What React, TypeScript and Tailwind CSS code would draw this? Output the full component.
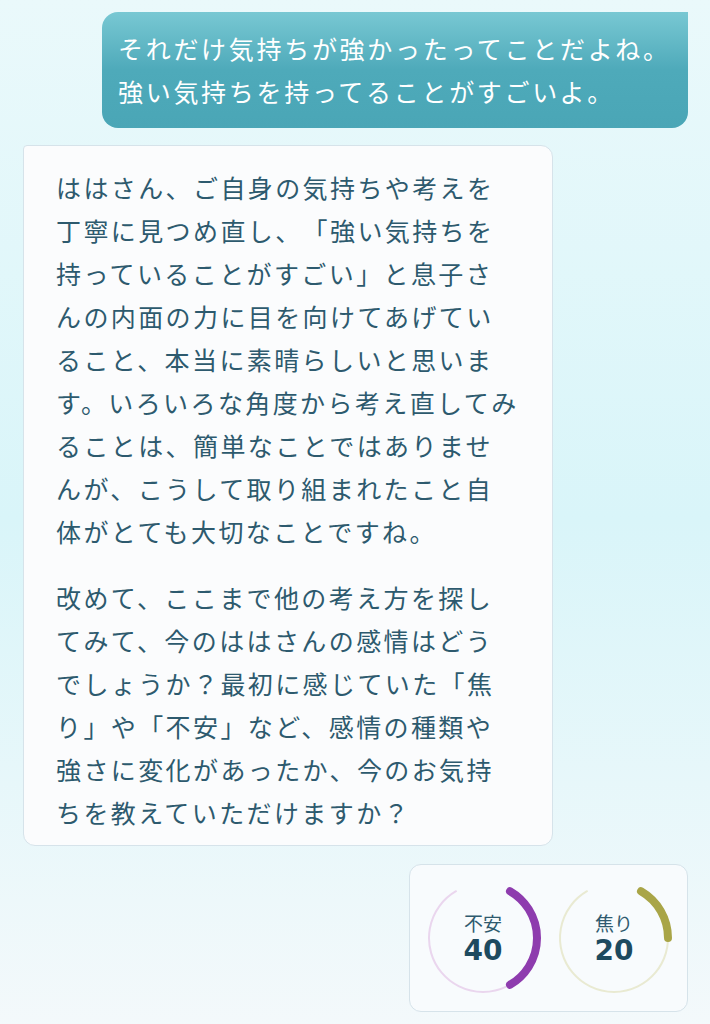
import React from "react";

const FONT = '"Noto Sans CJK JP", "Noto Sans", sans-serif';

const userLines = ["それだけ気持ちが強かったってことだよね。", "強い気持ちを持ってることがすごいよ。"];

const replyParagraphs = [
  [
    "ははさん、ご自身の気持ちや考えを",
    "丁寧に見つめ直し、「強い気持ちを",
    "持っていることがすごい」と息子さ",
    "んの内面の力に目を向けてあげてい",
    "ること、本当に素晴らしいと思いま",
    "す。いろいろな角度から考え直してみ",
    "ることは、簡単なことではありませ",
    "んが、こうして取り組まれたこと自",
    "体がとても大切なことですね。",
  ],
  [
    "改めて、ここまで他の考え方を探し",
    "てみて、今のははさんの感情はどう",
    "でしょうか？最初に感じていた「焦",
    "り」や「不安」など、感情の種類や",
    "強さに変化があったか、今のお気持",
    "ちを教えていただけますか？",
  ],
];

const emotions = [
  { label: "不安", value: 40, color: "#8e3cae", track: "#ead6ee" },
  { label: "焦り", value: 20, color: "#a9a547", track: "#e9ead2" },
];

// angle measured clockwise from 12 o'clock
function point(deg: number, r: number, c: number) {
  const rad = (deg * Math.PI) / 180;
  return [c + r * Math.sin(rad), c - r * Math.cos(rad)];
}

function arc(start: number, end: number, r: number, c: number) {
  const [x1, y1] = point(start, r, c);
  const [x2, y2] = point(end, r, c);
  const large = end - start > 180 ? 1 : 0;
  return `M ${x1} ${y1} A ${r} ${r} 0 ${large} 1 ${x2} ${y2}`;
}

function Gauge({ label, value, color, track }: (typeof emotions)[number]) {
  const start = 30;
  const sweep = 300;
  return (
    <div className="relative w-[116px] h-[116px]">
      <svg width="116" height="116" viewBox="0 0 116 116">
        <path d={arc(start, start + sweep, 54, 58)} fill="none" stroke={track} strokeWidth="2" strokeLinecap="round" />
        <path
          d={arc(start, start + (sweep * value) / 100, 54, 58)}
          fill="none"
          stroke={color}
          strokeWidth="8"
          strokeLinecap="round"
        />
      </svg>
      <div className="absolute inset-0 flex flex-col items-center justify-center pt-[2px]">
        <span className="text-[19px] leading-[20px] text-[#2f5a6e]">{label}</span>
        <span
          className="mt-[3px] text-[28px] leading-[30px] font-bold text-[#1d4a5f]"
          style={{ fontFamily: '"DejaVu Sans", sans-serif' }}
        >
          {value}
        </span>
      </div>
    </div>
  );
}

export default function App() {
  return (
    <div
      className="min-h-screen w-[710px] bg-gradient-to-b from-[#eaf9fb] via-[#d9f5f9] to-[#f4f9fb] px-[22px] pt-[12px] pb-6 [text-spacing-trim:space-all]"
      style={{ fontFamily: FONT }}
    >
      {/* user message */}
      <div className="flex justify-end">
        <div className="w-[586px] rounded-2xl rounded-tr-none bg-gradient-to-b from-[#78c8d3] via-[#4eaaba] to-[#4aa6b6] px-4 py-[15px] text-white">
          {userLines.map((line) => (
            <div key={line} className="text-[25px] leading-[43px] tracking-[2.7px] whitespace-nowrap">
              {line}
            </div>
          ))}
        </div>
      </div>

      {/* assistant reply */}
      <div className="mt-[17px] ml-[1px] w-[530px] rounded-xl rounded-tl-sm border border-[#d6e3ea] bg-[#fbfcfd] pl-[32px] pr-4 pt-[20px] pb-[11px] text-[#2d5a6e]">
        {replyParagraphs.map((para, i) => (
          <p key={i} className={i > 0 ? "mt-[23px]" : ""}>
            {para.map((line) => (
              <span key={line} className="block text-[25px] leading-[43px] tracking-[2.4px] whitespace-nowrap">
                {line}
              </span>
            ))}
          </p>
        ))}
      </div>

      {/* emotion gauges */}
      <div className="mt-[18px] flex justify-end">
        <div className="flex gap-[15px] rounded-xl border border-[#d6e3ea] bg-[#f8fbfd] p-[15px]">
          {emotions.map((e) => (
            <Gauge key={e.label} {...e} />
          ))}
        </div>
      </div>
    </div>
  );
}
